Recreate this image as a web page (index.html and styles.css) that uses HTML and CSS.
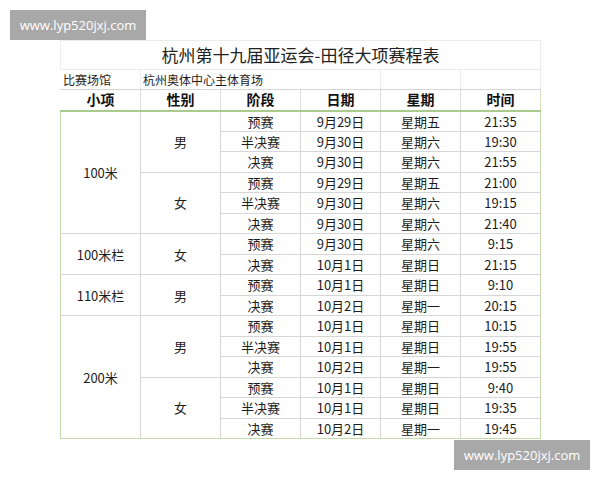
FILE: index.html
```html
<!DOCTYPE html>
<html lang="zh-CN">
<head>
<meta charset="utf-8">
<title>杭州第十九届亚运会-田径大项赛程表</title>
<link rel="stylesheet" href="styles.css">
</head>
<body>
<div class="page">
  <div class="watermark wm-top">www.lyp520jxj.com</div>
  <table class="schedule">
    <colgroup>
      <col class="c"><col class="c"><col class="c"><col class="c"><col class="c"><col class="c">
    </colgroup>
    <tr class="title-row"><td colspan="6" class="title">杭州第十九届亚运会-田径大项赛程表</td></tr>
    <tr class="venue-row"><td class="venue">比赛场馆</td><td colspan="3" class="venue">杭州奥体中心主体育场</td><td class="venue"></td><td class="venue last"></td></tr>
    <tr class="head-row"><th>小项</th><th>性别</th><th>阶段</th><th>日期</th><th>星期</th><th>时间</th></tr>

    <tr class="d"><td rowspan="6" class="first">100米</td><td rowspan="3">男</td><td>预赛</td><td>9月29日</td><td>星期五</td><td class="last">21:35</td></tr>
    <tr class="d"><td>半决赛</td><td>9月30日</td><td>星期六</td><td class="last">19:30</td></tr>
    <tr class="d"><td>决赛</td><td>9月30日</td><td>星期六</td><td class="last">21:55</td></tr>
    <tr class="d"><td rowspan="3">女</td><td>预赛</td><td>9月29日</td><td>星期五</td><td class="last">21:00</td></tr>
    <tr class="d"><td>半决赛</td><td>9月30日</td><td>星期六</td><td class="last">19:15</td></tr>
    <tr class="d"><td>决赛</td><td>9月30日</td><td>星期六</td><td class="last">21:40</td></tr>

    <tr class="d"><td rowspan="2" class="first">100米栏</td><td rowspan="2">女</td><td>预赛</td><td>9月30日</td><td>星期六</td><td class="last">9:15</td></tr>
    <tr class="d"><td>决赛</td><td>10月1日</td><td>星期日</td><td class="last">21:15</td></tr>

    <tr class="d"><td rowspan="2" class="first">110米栏</td><td rowspan="2">男</td><td>预赛</td><td>10月1日</td><td>星期日</td><td class="last">9:10</td></tr>
    <tr class="d"><td>决赛</td><td>10月2日</td><td>星期一</td><td class="last">20:15</td></tr>

    <tr class="d"><td rowspan="6" class="first bottom">200米</td><td rowspan="3">男</td><td>预赛</td><td>10月1日</td><td>星期日</td><td class="last">10:15</td></tr>
    <tr class="d"><td>半决赛</td><td>10月1日</td><td>星期日</td><td class="last">19:55</td></tr>
    <tr class="d"><td>决赛</td><td>10月2日</td><td>星期一</td><td class="last">19:55</td></tr>
    <tr class="d"><td rowspan="3" class="bottom">女</td><td>预赛</td><td>10月1日</td><td>星期日</td><td class="last">9:40</td></tr>
    <tr class="d"><td>半决赛</td><td>10月1日</td><td>星期日</td><td class="last">19:35</td></tr>
    <tr class="d"><td class="bottom">决赛</td><td class="bottom">10月2日</td><td class="bottom">星期一</td><td class="last bottom">19:45</td></tr>
  </table>
  <div class="watermark wm-bottom">www.lyp520jxj.com</div>
</div>
</body>
</html>
```

FILE: styles.css
```css
html, body {
  margin: 0;
  padding: 0;
  background: #ffffff;
}

.page {
  position: relative;
  width: 600px;
  height: 480px;
  padding: 40px 0 0 60px;
  box-sizing: border-box;
  font-family: "Noto Sans CJK SC", "Noto Sans", sans-serif;
  color: #1c1c1c;
}

.watermark {
  position: absolute;
  width: 136px;
  height: 30px;
  background: #a8a8a8;
  color: #ffffff;
  font-family: "Open Sans", "Liberation Sans", sans-serif;
  font-size: 13px;
  line-height: 30px;
  text-align: center;
}

.wm-top {
  left: 10px;
  top: 10px;
}

.wm-bottom {
  left: 454px;
  top: 440px;
}

.schedule {
  border-collapse: collapse;
  table-layout: fixed;
  width: 481px;
}

.schedule col.c {
  width: 80px;
}

.schedule td,
.schedule th {
  padding: 0;
  text-align: center;
  vertical-align: middle;
  border: 1px solid #d6d6d6;
  white-space: nowrap;
  overflow: visible;
}

.title-row {
  height: 29px;
}

.title {
  font-size: 17px;
  line-height: 26px;
  color: #222;
  border: 1px solid #ececec !important;
}

.venue-row {
  height: 20px;
}

.venue {
  font-size: 12px;
  line-height: 18px;
  text-align: left !important;
  padding-left: 2px !important;
  border-top: 1px solid #ececec !important;
  border-left: 1px solid #ececec !important;
  border-right: 1px solid #ececec !important;
}

.venue-row td:first-child {
  border-left-color: #ffffff !important;
}

.head-row {
  height: 21px;
}

.head-row th {
  font-size: 14px;
  font-weight: bold;
  line-height: 19px;
  color: #111;
  border-top: 1px solid #c9deb6;
  border-bottom: 2px solid #a9cc8c;
  border-left: 1px solid #dcdcdc;
  border-right: 1px solid #dcdcdc;
}

.head-row th:first-child {
  border-left-color: #ffffff;
}

.head-row th:last-child {
  border-right-color: #d0e2c0;
}

.d {
  height: 20.5px;
}

.d td {
  font-size: 13px;
  line-height: 17px;
}

.schedule td.first {
  border-left: 1px solid #c4d9ae;
}

.schedule td.last {
  border-right: 1px solid #c4d9ae;
}

.schedule td.bottom {
  border-bottom: 1px solid #c4d9ae;
}
```
